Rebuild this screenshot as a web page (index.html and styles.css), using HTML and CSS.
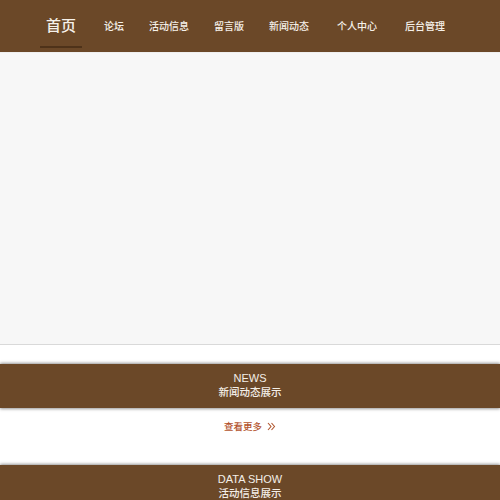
FILE: index.html
```html
<!DOCTYPE html>
<html lang="zh">
<head>
<meta charset="utf-8">
<title>首页</title>
<link rel="stylesheet" href="styles.css">
</head>
<body>
<nav class="nav">
  <a class="nav-item active">首页</a>
  <a class="nav-item">论坛</a>
  <a class="nav-item">活动信息</a>
  <a class="nav-item">留言版</a>
  <a class="nav-item">新闻动态</a>
  <a class="nav-item wide">个人中心</a>
  <a class="nav-item wide">后台管理</a>
</nav>
<div class="banner"></div>
<section class="section">
  <div class="section-title">
    <div class="en">NEWS</div>
    <div class="cn">新闻动态展示</div>
  </div>
  <div class="more">查看更多
    <svg class="more-icon" width="9" height="9" viewBox="0 0 9 9"><path d="M1 1 L4 4.5 L1 8 M4.5 1 L7.5 4.5 L4.5 8" fill="none" stroke="#b0552e" stroke-width="1.1"/></svg>
  </div>
</section>
<section class="section">
  <div class="section-title">
    <div class="en">DATA SHOW</div>
    <div class="cn">活动信息展示</div>
  </div>
</section>
</body>
</html>
```
FILE: styles.css
```css
* { box-sizing: border-box; }
html, body { margin: 0; padding: 0; background: #fff; overflow: hidden; }
body { font-family: "Noto Sans CJK SC", "Noto Sans", sans-serif; width: 500px; height: 500px; }
.nav {
  height: 52px;
  background: #6b4828;
  display: flex;
  align-items: center;
  padding-left: 40px;
  gap: 25px;
}
.nav-item {
  color: #f6f1ea;
  font-size: 10px;
  font-weight: 500;
  line-height: 16px;
  white-space: nowrap;
}
.nav-item.wide { margin-left: 3px; }
.nav-item.active {
  font-size: 15px;
  line-height: 24px;
  padding: 0 6px;
  margin-right: -3px;
  align-self: stretch;
  display: flex;
  align-items: center;
  border-bottom: 2px solid #4e3219;
  margin-bottom: 4px;
  margin-top: 4px;
}
.banner {
  height: 293px;
  background: #f7f7f7;
  border-bottom: 1px solid #d9d9d9;
  border-top: 1px solid #efefef;
}
.section { margin-top: 19px; }
.section-title {
  background: #6b4828;
  height: 44px;
  padding-top: 7px;
  text-align: center;
  color: #f4efe8;
  font-size: 10.5px;
  font-weight: 500;
  line-height: 14px;
  box-shadow: 0 -1px 3px rgba(0,0,0,0.35), 0 1px 3px rgba(0,0,0,0.35);
}
.section-title .en { font-family: "Liberation Sans", Arial, sans-serif; font-size: 11px; font-weight: 400; }
.more {
  text-align: center;
  margin-top: 11px;
  height: 27px;
  color: #b3532d;
  font-size: 9.5px;
  font-weight: 500;
  line-height: 14px;
}
.more-icon { vertical-align: -1px; margin-left: 3px; }
```
